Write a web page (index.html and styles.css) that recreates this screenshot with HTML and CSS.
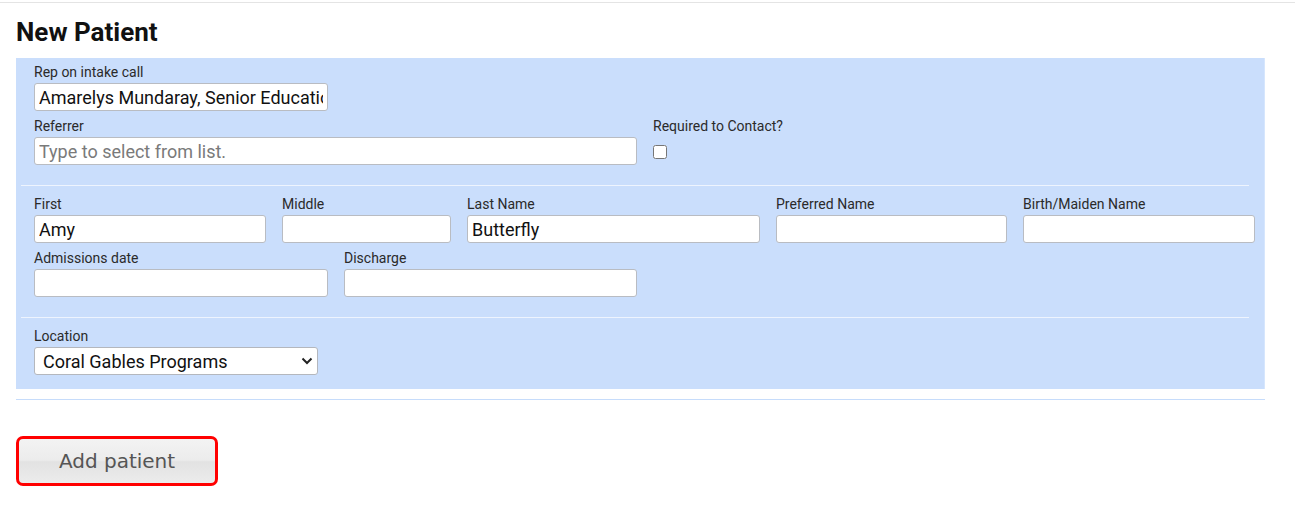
FILE: index.html
```html
<!DOCTYPE html>
<html lang="en">
<head>
<meta charset="utf-8">
<title>New Patient</title>
<link rel="stylesheet" href="styles.css">
</head>
<body>
<div class="topbar"></div>
<div class="page">
  <h1 class="title">New Patient</h1>
  <form class="panel">
    <div class="section section-first">
      <div class="row row-rep">
        <div class="field">
          <label class="lbl">Rep on intake call</label>
          <input class="inp" type="text" value="Amarelys Mundaray, Senior Education Specialist">
        </div>
      </div>
      <div class="row row-ref">
        <div class="field">
          <label class="lbl">Referrer</label>
          <input class="inp" type="text" placeholder="Type to select from list.">
        </div>
        <div class="field">
          <label class="lbl">Required to Contact?</label>
          <div class="chk-wrap"><input class="chk" type="checkbox"></div>
        </div>
      </div>
    </div>
    <div class="sep"></div>
    <div class="section">
      <div class="row row-names">
        <div class="field">
          <label class="lbl">First</label>
          <input class="inp" type="text" value="Amy">
        </div>
        <div class="field">
          <label class="lbl">Middle</label>
          <input class="inp" type="text">
        </div>
        <div class="field">
          <label class="lbl">Last Name</label>
          <input class="inp" type="text" value="Butterfly">
        </div>
        <div class="field">
          <label class="lbl">Preferred Name</label>
          <input class="inp" type="text">
        </div>
        <div class="field">
          <label class="lbl">Birth/Maiden Name</label>
          <input class="inp" type="text">
        </div>
      </div>
      <div class="row row-dates">
        <div class="field">
          <label class="lbl">Admissions date</label>
          <input class="inp" type="text">
        </div>
        <div class="field">
          <label class="lbl">Discharge</label>
          <input class="inp" type="text">
        </div>
      </div>
    </div>
    <div class="sep"></div>
    <div class="section section-last">
      <div class="row row-loc">
        <div class="field">
          <label class="lbl">Location</label>
          <div class="sel-wrap">
            <select class="sel">
              <option>Coral Gables Programs</option>
            </select>
            <svg class="chev" width="12" height="8" viewBox="0 0 12 8"><path d="M1.5 1.5 L6 6 L10.5 1.5" fill="none" stroke="#222" stroke-width="2"/></svg>
          </div>
        </div>
      </div>
    </div>
  </form>
  <div class="rule"></div>
  <button class="btn" type="button">Add patient</button>
</div>
</body>
</html>
```

FILE: styles.css
```css
html, body {
  margin: 0;
  padding: 0;
  background: #ffffff;
  font-family: Roboto, "Liberation Sans", Arial, sans-serif;
  color: #222;
}

.topbar {
  margin-top: 2px;
  height: 1px;
  background: #e4e4e4;
}

.page {
  padding: 0 30px 0 16px;
}

.title {
  margin: 15px 0 12px;
  font-size: 26px;
  line-height: 28px;
  font-weight: 700;
  color: #111;
}

.panel {
  background: #cadefc;
  border-right: 1px solid #d6e6fd;
  padding: 0 9px 0 18px;
}

.section {
  padding: 10px 0 20px;
}

.section-first {
  padding-top: 6px;
}

.section-last {
  padding-bottom: 14px;
}

.sep {
  height: 1px;
  background: #eef4fe;
  margin: 0 6px 0 -13px;
}

.row {
  display: grid;
  column-gap: 16px;
  margin-bottom: 7px;
}
.row:last-child {
  margin-bottom: 0;
}

.row-rep { grid-template-columns: 294px; }
.row-ref { grid-template-columns: 603px 200px; }
.row-names { grid-template-columns: 232px 169px 293px 231px 232px; }
.row-dates { grid-template-columns: 294px 293px; }
.row-loc { grid-template-columns: 284px; }

.field {
  display: flex;
  flex-direction: column;
}

.lbl {
  font-size: 14px;
  line-height: 16px;
  color: #2a2a2a;
  margin-bottom: 3px;
  white-space: nowrap;
}

.inp {
  box-sizing: border-box;
  height: 28px;
  width: 100%;
  margin: 0;
  padding: 0 4px;
  border: 1px solid #b9bcc2;
  border-radius: 3px;
  background: #fff;
  font-family: Roboto, "Liberation Sans", Arial, sans-serif;
  font-size: 18px;
  color: #111;
  outline: none;
}
.inp::placeholder {
  color: #7a7a7a;
}

.chk-wrap {
  height: 28px;
  display: flex;
  align-items: center;
}
.chk {
  margin: 2px 0 0 0;
  width: 14px;
  height: 14px;
}

.sel-wrap {
  position: relative;
}
.sel {
  box-sizing: border-box;
  -webkit-appearance: none;
  appearance: none;
  width: 100%;
  height: 28px;
  margin: 0;
  padding: 0 24px 0 8px;
  border: 1px solid #b4b7bd;
  border-radius: 3px;
  background: #fff;
  font-family: Roboto, "Liberation Sans", Arial, sans-serif;
  font-size: 18px;
  color: #111;
  outline: none;
}
.chev {
  position: absolute;
  right: 5px;
  top: 10px;
  pointer-events: none;
}

.rule {
  margin-top: 10px;
  height: 1px;
  background: #c6dcfb;
}

.btn {
  margin-top: 36px;
  box-sizing: border-box;
  width: 202px;
  height: 50px;
  border: 3px solid #ff0000;
  border-radius: 7px;
  background: linear-gradient(#f3f3f3 0%, #ececec 48%, #e2e2e2 52%, #ececec 100%);
  font-family: "DejaVu Sans", Verdana, sans-serif;
  font-size: 20px;
  color: #555;
  padding: 0;
  cursor: pointer;
}
```
